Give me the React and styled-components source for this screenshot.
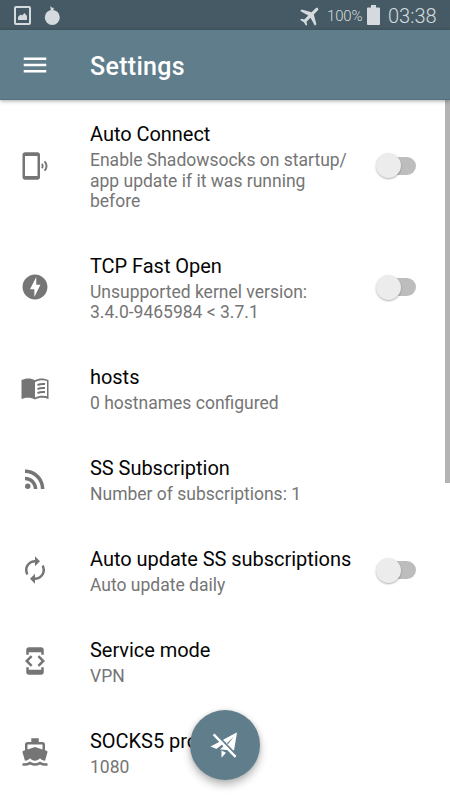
import React from "react";
import styled, { createGlobalStyle } from "styled-components";
import {
  MdPhonelinkRing,
  MdOfflineBolt,
  MdRssFeed,
  MdAutorenew,
  MdDeveloperMode,
  MdDirectionsBoat,
  MdAirplanemodeActive,
  MdMenu,
} from "react-icons/md";

const GlobalStyle = createGlobalStyle`
  * { box-sizing: border-box; }
  body { margin: 0; overflow: hidden; background: #fff; font-family: Roboto, "Liberation Sans", sans-serif; }
`;

const Screen = styled.div`
  position: relative;
  display: flex;
  flex-direction: column;
  width: 450px;
  height: 800px;
  overflow: hidden;
  background: #fff;
`;

const StatusBar = styled.header`
  display: flex;
  flex: none;
  align-items: center;
  height: 30px;
  padding: 0 12px 0 14px;
  background: #455a64;
  color: #d5dade;
`;

const Notifications = styled.div`
  display: flex;
  align-items: center;
  gap: 13px;
  flex: 1;
  svg { display: block; }
`;

const SystemIcons = styled.div`
  display: flex;
  align-items: center;
  svg { display: block; }
`;

const PlaneIcon = styled(MdAirplanemodeActive)`
  transform: rotate(45deg);
`;

const BatteryLevel = styled.span`
  width: 36px;
  margin: 2px 4px 0 4px;
  font-size: 15px;
  line-height: 20px;
  letter-spacing: -0.15px;
  font-weight: 300;
  white-space: nowrap;
`;

const Clock = styled.span`
  width: 50px;
  margin: 2px 0 0 8px;
  font-size: 20px;
  line-height: 26px;
  font-weight: 300;
  white-space: nowrap;
`;

const AppBar = styled.nav`
  display: flex;
  flex: none;
  align-items: center;
  z-index: 1;
  height: 70px;
  padding-left: 20px;
  background: #607d8b;
  border-bottom: 1px solid #547180;
  box-shadow: 0 1px 4px rgba(0, 0, 0, 0.35);
  color: #fff;
`;

const MenuButton = styled.button`
  display: flex;
  width: 70px;
  padding: 0;
  border: 0;
  background: none;
  color: inherit;
`;

const PageTitle = styled.h1`
  margin: 4px 0 0;
  font-size: 25px;
  line-height: 30px;
  font-weight: 500;
  letter-spacing: 0.3px;
`;

const Content = styled.main`
  display: flex;
  flex: 1;
  min-height: 0;
`;

const SettingsList = styled.div`
  width: 445px;
  overflow: hidden;
`;

const ScrollThumb = styled.div`
  width: 5px;
  height: 383px;
  background: #b4b4b4;
`;

const Row = styled.section`
  display: flex;
  align-items: center;
  height: ${({ $lines }) => 70.4 + $lines * 20.45}px;
  padding-left: 20px;
`;

const RowIcon = styled.div`
  display: flex;
  flex: none;
  width: 70px;
  color: #757575;
`;

const RowText = styled.div`
  width: 280px;
  padding-top: 2px;
  white-space: nowrap;
`;

const RowTitle = styled.h2`
  margin: 0 0 4px;
  color: #050505;
  font-size: 20px;
  line-height: 24px;
  font-weight: 400;
  letter-spacing: -0.04px;
`;

const Summary = styled.p`
  margin: 0;
  color: #757575;
  font-size: 17.5px;
  line-height: 20.45px;
`;

const Switch = styled.button`
  display: flex;
  align-items: center;
  width: 35px;
  height: 18px;
  margin-left: 11px;
  padding: 0;
  border: 0;
  border-radius: 9px;
  background: #bdbdbd;
`;

const Thumb = styled.span`
  flex: none;
  width: 25px;
  height: 25px;
  margin-left: -5px;
  border-radius: 50%;
  background: #ececec;
  box-shadow: 0 1px 2px rgba(0, 0, 0, 0.3);
`;

const ConnectButton = styled.button`
  position: absolute;
  left: 190px;
  top: 710px;
  z-index: 2;
  display: flex;
  align-items: center;
  justify-content: center;
  width: 70px;
  height: 70px;
  padding: 0;
  border: 0;
  border-radius: 50%;
  background: #607d8b;
  box-shadow: 0 5px 9px rgba(0, 0, 0, 0.27), 0 0 4px rgba(0, 0, 0, 0.12);
`;

const PictureIcon = () => (
  <svg width="17" height="19" viewBox="0 0 17 19">
    <rect x="1" y="1" width="15" height="17" rx="1" fill="none" stroke="currentColor" strokeWidth="2" />
    <path d="M4 14V11l2.5-2.5 1.5 1 2.5-2.5L13 10v4z" fill="currentColor" />
  </svg>
);

const FruitIcon = () => (
  <svg width="16" height="20" viewBox="0 0 16 20">
    <circle cx="8.3" cy="12.4" r="7.5" fill="currentColor" />
    <path d="M6.3 1l1.6 1.5L10 3 8.9 6H6.8z" fill="currentColor" />
  </svg>
);

const BatteryIcon = () => (
  <svg width="13" height="20" viewBox="0 0 13 20">
    <path d="M4 0h5v2.5h3q1 0 1 1V19q0 1-1 1H1q-1 0-1-1V3.5q0-1 1-1h3z" fill="currentColor" />
  </svg>
);

const BookIcon = () => (
  <svg width="30" height="30" viewBox="0 -1 30 30">
    <path
      fill="currentColor"
      fillRule="evenodd"
      d="M15 6.3C11.3 3.8 5.7 3.8 1.5 6V25c4.2-1.8 9.8-1.8 13.5.5 3.7-2.3 9.3-2.3 13.500-.5V6C24.300 3.800 18.700 3.800 15 6.300zM27 22.200c-3.500-1-8.500-.7-12 1.300V8.300c3.500-2 8.500-2.500 12-1.300z"
    />
    <path d="M17.500 11q3.500-1.400 7.500-.9M17.500 15q3.500-1.400 7.500-.9M17.500 19q3.500-1.400 7.500-.9" fill="none" stroke="currentColor" strokeWidth="2" />
  </svg>
);

const PlaneOffIcon = () => (
  <svg width="30" height="30" viewBox="0 0 30 30">
    <path d="M27 2.500L0.500 16.500 6.500 19z" fill="#fff" />
    <path d="M27 2.500L10 19.500 24 20.500z" fill="#fff" />
    <path d="M27 2.500L14 9.500 17 15z" fill="#fff" />
    <path d="M11.500 20.500v7.200l4.500-5z" fill="#fff" />
    <path d="M24 6.500L17 13.300l1 1z" fill="#607d8b" />
    <path d="M12 16L6.500 19l1.500.8 5-3z" fill="#607d8b" />
    <path d="M4.900 2.900l22 22.500" stroke="#607d8b" strokeWidth="1.900" />
    <path d="M3.600 4.300l22 22.500" stroke="#fff" strokeWidth="2.400" />
  </svg>
);

const settings = [
  { icon: MdPhonelinkRing, title: "Auto Connect", summary: ["Enable Shadowsocks on startup/", "app update if it was running", "before"], toggle: true },
  { icon: MdOfflineBolt, title: "TCP Fast Open", summary: ["Unsupported kernel version:", "3.4.0-9465984 < 3.7.1"], toggle: true },
  { icon: BookIcon, title: "hosts", summary: ["0 hostnames configured"] },
  { icon: MdRssFeed, title: "SS Subscription", summary: ["Number of subscriptions: 1"] },
  { icon: MdAutorenew, title: "Auto update SS subscriptions", summary: ["Auto update daily"], toggle: true },
  { icon: MdDeveloperMode, title: "Service mode", summary: ["VPN"] },
  { icon: MdDirectionsBoat, title: "SOCKS5 proxy port", summary: ["1080"] },
];

export default function App() {
  return (
    <>
      <GlobalStyle />
      <Screen>
        <StatusBar>
          <Notifications>
            <PictureIcon />
            <FruitIcon />
          </Notifications>
          <SystemIcons>
            <PlaneIcon size={25} />
            <BatteryLevel>100%</BatteryLevel>
            <BatteryIcon />
            <Clock>03:38</Clock>
          </SystemIcons>
        </StatusBar>
        <AppBar>
          <MenuButton aria-label="Menu">
            <MdMenu size={30} />
          </MenuButton>
          <PageTitle>Settings</PageTitle>
        </AppBar>
        <Content>
          <SettingsList>
            {settings.map(({ icon: Icon, title, summary, toggle }) => (
              <Row key={title} $lines={summary.length}>
                <RowIcon>
                  <Icon size={30} />
                </RowIcon>
                <RowText>
                  <RowTitle>{title}</RowTitle>
                  {summary.map((line) => (
                    <Summary key={line}>{line}</Summary>
                  ))}
                </RowText>
                {toggle && (
                  <Switch role="switch" aria-checked="false" aria-label={title}>
                    <Thumb />
                  </Switch>
                )}
              </Row>
            ))}
          </SettingsList>
          <ScrollThumb />
        </Content>
        <ConnectButton aria-label="Connect">
          <PlaneOffIcon />
        </ConnectButton>
      </Screen>
    </>
  );
}
